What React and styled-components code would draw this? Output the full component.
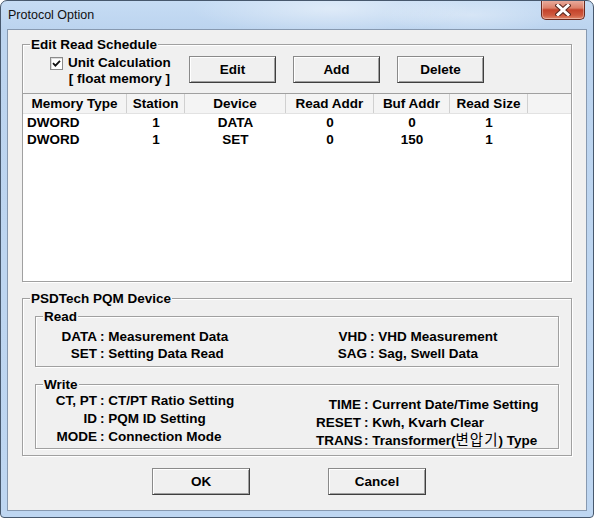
import React from 'react'
import styled, { createGlobalStyle } from 'styled-components'

const FONT = `"Liberation Sans", Arial, "Noto Sans CJK KR", sans-serif`
const SIZE = '13.5px'

const GlobalStyle = createGlobalStyle`
  html, body { margin: 0; padding: 0; background: #ffffff; }
  * { box-sizing: border-box; }
`

const columns = [
  { title: 'Memory Type', width: 104, align: 'left' },
  { title: 'Station', width: 58, align: 'center' },
  { title: 'Device', width: 101, align: 'center' },
  { title: 'Read Addr', width: 88, align: 'center' },
  { title: 'Buf Addr', width: 76, align: 'center' },
  { title: 'Read Size', width: 78, align: 'center' },
]

const rows = [
  ['DWORD', '1', 'DATA', '0', '0', '1'],
  ['DWORD', '1', 'SET', '0', '150', '1'],
]

const CheckMark = () => (
  <svg width="9" height="9" viewBox="0 0 9 9">
    <path d="M1 4.2 L3.4 6.6 L8 1.8" fill="none" stroke="#111" strokeWidth="1.8" />
  </svg>
)

const CloseGlyph = () => (
  <svg width="16" height="12" viewBox="0 0 16 12">
    <path d="M3 1.5 L13 10.5 M13 1.5 L3 10.5" stroke="#5b2a22" strokeWidth="5" strokeLinecap="square" />
    <path d="M3 1.5 L13 10.5 M13 1.5 L3 10.5" stroke="#ffffff" strokeWidth="3" strokeLinecap="square" />
  </svg>
)

const App = () => {
  return (
    <>
      <GlobalStyle />
      <Window>
        <TitleBar>
          <Title>Protocol Option</Title>
          <CloseButton>
            <CloseGlyph />
          </CloseButton>
        </TitleBar>
        <Client>
          <Group>
            <Legend>Edit Read Schedule</Legend>
            <ControlsRow>
              <CheckArea>
                <CheckBox>
                  <CheckMark />
                </CheckBox>
                <CheckText>
                  Unit Calculation
                  <br />[ float memory ]
                </CheckText>
              </CheckArea>
              <Button $w={87}>Edit</Button>
              <Button $w={87} $gap={17}>Add</Button>
              <Button $w={87} $gap={17}>Delete</Button>
            </ControlsRow>
            <List>
              <Header>
                {columns.map((c) => (
                  <HeaderCell key={c.title} $w={c.width}>
                    {c.title}
                  </HeaderCell>
                ))}
                <HeaderFiller />
              </Header>
              {rows.map((r, i) => (
                <Row key={i}>
                  {r.map((v, j) => (
                    <Cell key={j} $w={columns[j].width} $align={columns[j].align}>
                      {v}
                    </Cell>
                  ))}
                </Row>
              ))}
            </List>
          </Group>

          <Group $top={16} $pad="17px 12px 6px">
            <Legend>PSDTech PQM Device</Legend>
            <SubGroup $h={51}>
              <Legend>Read</Legend>
              <Column $w={284} $labelW={44} $top={11} $lh={17}>
                <Label>DATA</Label>
                <Value>: Measurement Data</Value>
                <Label>SET</Label>
                <Value>: Setting Data Read</Value>
              </Column>
              <Column $labelW={30} $top={11} $lh={17}>
                <Label>VHD</Label>
                <Value>: VHD Measurement</Value>
                <Label>SAG</Label>
                <Value>: Sag, Swell Data</Value>
              </Column>
            </SubGroup>
            <SubGroup $h={65} $top={17}>
              <Legend>Write</Legend>
              <Column $w={263} $labelW={44} $top={7} $lh={18}>
                <Label>CT, PT</Label>
                <Value>: CT/PT Ratio Setting</Value>
                <Label>ID</Label>
                <Value>: PQM ID Setting</Value>
                <Label>MODE</Label>
                <Value>: Connection Mode</Value>
              </Column>
              <Column $labelW={45} $top={11} $lh={18}>
                <Label>TIME</Label>
                <Value>: Current Date/Time Setting</Value>
                <Label>RESET</Label>
                <Value>: Kwh, Kvarh Clear</Value>
                <Label>TRANS</Label>
                <Value>
                  : Transformer(<Korean>변압기</Korean>) Type
                </Value>
              </Column>
            </SubGroup>
          </Group>

          <ButtonBar>
            <Button $w={98}>OK</Button>
            <Button $w={98} $gap={78}>Cancel</Button>
          </ButtonBar>
        </Client>
      </Window>
    </>
  )
}

const Window = styled.div`
  width: 594px;
  height: 518px;
  border: 1px solid #47586d;
  border-radius: 7px 7px 4px 4px;
  background:
    radial-gradient(ellipse 140px 26px at 330px 8px, rgba(255, 255, 255, 0.45), rgba(255, 255, 255, 0)),
    radial-gradient(ellipse 90px 20px at 470px 14px, rgba(255, 255, 255, 0.35), rgba(255, 255, 255, 0)),
    linear-gradient(180deg, #c6dcf4 0px, #bcd4ef 28px, #bed6f1 100%);
  display: flex;
  flex-direction: column;
  font-family: ${FONT};
  overflow: hidden;
`

const TitleBar = styled.div`
  height: 28px;
  flex: none;
  display: flex;
  justify-content: space-between;
  align-items: flex-start;
  padding: 0 8px 0 7px;
`

const Title = styled.div`
  margin-top: 7px;
  font-size: 12.5px;
  line-height: 14px;
  color: #111;
`

const CloseButton = styled.div`
  width: 44px;
  height: 20px;
  margin-top: -1px;
  border: 1px solid #6b2a1e;
  border-top: none;
  border-radius: 0 0 5px 5px;
  background: linear-gradient(180deg, #eab0a2 0%, #dc8069 42%, #c4432b 52%, #cf5a3f 80%, #e0886c 100%);
  box-shadow: inset 0 0 0 1px rgba(255, 255, 255, 0.35);
  display: flex;
  align-items: center;
  justify-content: center;
`

const Client = styled.div`
  flex: 1;
  margin: 0 6px 6px;
  border: 1px solid #8799b0;
  background: #f0f0f0;
  padding: 14px 14px 0;
  display: flex;
  flex-direction: column;
`

const Group = styled.div`
  position: relative;
  margin-top: ${(p) => p.$top || 0}px;
  padding: ${(p) => p.$pad || '0'};
  border: 1px solid #a0a0a0;
  box-shadow: inset 1px 1px 0 #ffffff, 1px 1px 0 #ffffff;
`

const Legend = styled.div`
  position: absolute;
  top: -8px;
  left: 7px;
  padding: 0 1px;
  background: #f0f0f0;
  font-size: ${SIZE};
  font-weight: 700;
  line-height: 15px;
  color: #000;
`

const ControlsRow = styled.div`
  display: flex;
  align-items: flex-start;
  padding: 11px 0 0 27px;
  height: 38px;
`

const CheckArea = styled.div`
  width: 139px;
  display: flex;
  align-items: flex-start;
`

const CheckBox = styled.div`
  width: 13px;
  height: 13px;
  margin-top: 1px;
  border: 1px solid #8a8a8a;
  background: #ffffff;
  box-shadow: inset 1px 1px 0 #dcdcdc;
  display: flex;
  align-items: center;
  justify-content: center;
`

const CheckText = styled.div`
  margin: -1px 0 0 5px;
  text-align: center;
  font-size: ${SIZE};
  font-weight: 700;
  line-height: 16px;
  color: #000;
`

const Button = styled.div`
  width: ${(p) => p.$w}px;
  height: 27px;
  margin-left: ${(p) => p.$gap || 0}px;
  border: 1px solid #8a8a8a;
  border-right-color: #3f3f3f;
  border-bottom-color: #3f3f3f;
  box-shadow: inset 1px 1px 0 #ffffff, inset -1px -1px 0 #a0a0a0;
  background: #f0f0f0;
  display: flex;
  align-items: center;
  justify-content: center;
  font-size: ${SIZE};
  font-weight: 700;
  color: #000;
`

const List = styled.div`
  margin: 10px -1px -1px;
  height: 189px;
  border: 1px solid #a0a0a0;
  background: #ffffff;
`

const Header = styled.div`
  display: flex;
  height: 20px;
  background: #f4f4f4;
  border-bottom: 1px solid #e2e2e2;
`

const HeaderCell = styled.div`
  width: ${(p) => p.$w}px;
  border-right: 1px solid #d0d0d0;
  text-align: center;
  font-size: ${SIZE};
  font-weight: 700;
  line-height: 20px;
  color: #000;
  white-space: nowrap;
`

const HeaderFiller = styled.div`
  flex: 1;
`

const Row = styled.div`
  display: flex;
  height: 17px;
`

const Cell = styled.div`
  width: ${(p) => p.$w}px;
  padding-left: ${(p) => (p.$align === 'left' ? 4 : 0)}px;
  text-align: ${(p) => p.$align};
  font-size: ${SIZE};
  font-weight: 700;
  line-height: 17px;
  color: #000;
`

const SubGroup = styled.div`
  position: relative;
  display: flex;
  height: ${(p) => p.$h}px;
  margin-top: ${(p) => p.$top || 0}px;
  padding-left: 17px;
  border: 1px solid #a0a0a0;
  box-shadow: inset 1px 1px 0 #ffffff, 1px 1px 0 #ffffff;
`

const Column = styled.div`
  display: grid;
  grid-template-columns: ${(p) => p.$labelW}px auto;
  grid-auto-rows: ${(p) => p.$lh}px;
  column-gap: 3px;
  align-content: start;
  width: ${(p) => (p.$w ? `${p.$w}px` : 'auto')};
  padding-top: ${(p) => p.$top}px;
  font-size: ${SIZE};
  font-weight: 700;
  line-height: ${(p) => p.$lh}px;
  color: #000;
`

const Label = styled.div`
  text-align: right;
  white-space: nowrap;
`

const Value = styled.div`
  white-space: nowrap;
`

const Korean = styled.span`
  font-family: "Noto Sans CJK KR", sans-serif;
  font-weight: 400;
  font-size: 14.5px;
  line-height: 10px;
  letter-spacing: 1px;
`

const ButtonBar = styled.div`
  display: flex;
  margin-top: 12px;
  padding-left: 130px;
`

export default App
